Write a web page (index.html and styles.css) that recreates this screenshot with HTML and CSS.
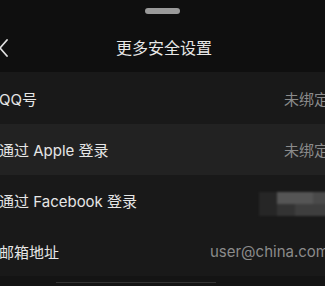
FILE: index.html
```html
<!DOCTYPE html>
<html lang="zh-CN">
<head>
  <meta charset="UTF-8">
  <meta name="viewport" content="width=device-width, initial-scale=1.0">
  <title>更多安全设置</title>
  <link rel="stylesheet" href="styles.css">
</head>
<body>
  <div class="sheet">
    <div class="top">
      <div class="handle"></div>
      <div class="header">
        <svg class="back" width="12" height="20" viewBox="0 0 12 20">
          <path d="M8 2 L1 10 L8 18" fill="none" stroke="#e0e0e0" stroke-width="1.8" stroke-linecap="round" stroke-linejoin="round"/>
        </svg>
        <div class="title">更多安全设置</div>
      </div>
    </div>
    <div class="list">
      <div class="row">
        <span class="label">QQ号</span>
        <span class="value">未绑定</span>
      </div>
      <div class="row light">
        <span class="label">通过 Apple 登录</span>
        <span class="value">未绑定</span>
      </div>
      <div class="row">
        <span class="label">通过 Facebook 登录</span>
        <span class="masked">
          <i></i><i></i><i></i><i></i>
          <i></i><i></i><i></i><i></i>
        </span>
      </div>
      <div class="row last">
        <span class="label">邮箱地址</span>
        <span class="value">user@china.com</span>
      </div>
    </div>
    <div class="bottom">
      <div class="line"></div>
    </div>
  </div>
</body>
</html>
```

FILE: styles.css
```css
body {
  margin: 0;
  background-color: #0f0f0f;
  font-family: "Inter", "Noto Sans CJK SC", sans-serif;
  overflow: hidden;
}

.sheet {
  width: 325px;
  height: 286px;
  overflow: hidden;
}

.top {
  height: 72px;
  background-color: #0f0f0f;
}

.handle {
  width: 35px;
  height: 6px;
  margin: 0 auto;
  position: relative;
  top: 8px;
  border-radius: 3px;
  background-color: #9a9a9a;
}

.header {
  position: relative;
  height: 52px;
  margin-top: 14px;
  display: flex;
  align-items: center;
  justify-content: center;
}

.back {
  position: absolute;
  left: -1px;
  top: 18px;
}

.title {
  color: #e8e8e8;
  font-size: 16px;
  font-family: "Noto Sans CJK SC", sans-serif;
  margin-left: 3px;
  margin-top: 1px;
}

.row {
  height: 51px;
  display: flex;
  align-items: center;
  justify-content: space-between;
  background-color: #191919;
  margin-right: -4px;
}

.row:first-child {
  height: 52px;
}

.row.light {
  background-color: #222222;
}

.row.last {
  height: 50px;
}

.label {
  color: #e6e6e6;
  font-size: 15px;
  margin-left: -1px;
}

.value {
  color: #8b8b8b;
  font-size: 15px;
  white-space: nowrap;
  margin-left: 6px;
}

.masked {
  display: grid;
  grid-template-columns: repeat(4, 18px);
  grid-auto-rows: 12px;
  width: 70px;
  margin-top: 6px;
  filter: blur(1px);
}

.masked i {
  display: block;
  background-color: #3e3e3e;
}

.masked i:nth-child(1),
.masked i:nth-child(5) {
  background-color: #262626;
}

.masked i:nth-child(2),
.masked i:nth-child(3) {
  background-color: #555;
}

.masked i:nth-child(4) {
  background-color: #4a4a4a;
}

.masked i:nth-child(6) {
  background-color: #333;
}

.bottom {
  height: 12px;
  background-color: #141414;
  display: flex;
  align-items: center;
}

.line {
  width: 160px;
  height: 1px;
  margin-left: 56px;
  background-color: #333;
}
```
